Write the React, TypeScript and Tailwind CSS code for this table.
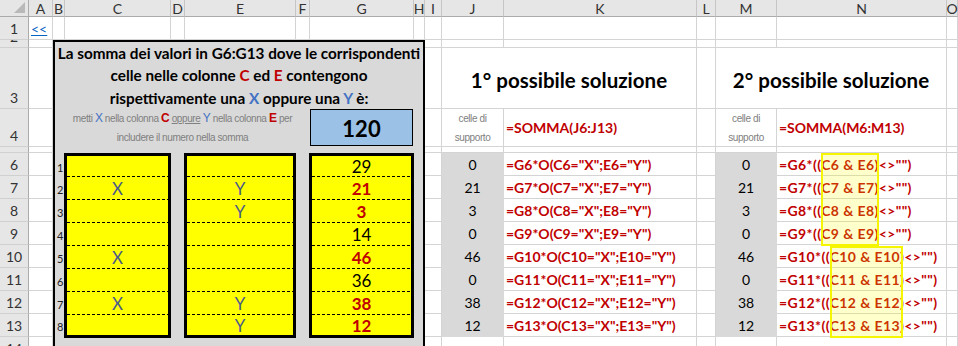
import React from 'react';

const COLS = ['A', 'B', 'C', 'D', 'E', 'F', 'G', 'H', 'I', 'J', 'K', 'L', 'M', 'N', 'O'];
const ROWS = [1, 2, 3, 4, 5, 6, 7, 8, 9, 10, 11, 12, 13, 14];
const UNDER_PANEL = ['B', 'C', 'D', 'E', 'F', 'G', 'H'];

const data = [
  { c: '', e: '', g: 29, hit: false },
  { c: 'X', e: 'Y', g: 21, hit: true },
  { c: '', e: 'Y', g: 3, hit: true },
  { c: '', e: '', g: 14, hit: false },
  { c: 'X', e: '', g: 46, hit: true },
  { c: '', e: '', g: 36, hit: false },
  { c: 'X', e: 'Y', g: 38, hit: true },
  { c: '', e: 'Y', g: 12, hit: true },
];

// content heights of the 8 rows inside the yellow boxes (rows 2..8 also get a dashed line on top)
const boxRows = [20, 22, 22, 22, 22, 22, 22, 20];

const Dash = () => (
  <div className="h-px bg-[image:repeating-linear-gradient(90deg,#000_0_3px,transparent_3px_5px)]" />
);

function YellowBox({ width, render }: { width: string; render: (i: number) => React.ReactNode }) {
  return (
    <div className={`${width} border-[3px] border-black bg-[#ffff00]`}>
      {boxRows.map((h, i) => (
        <React.Fragment key={i}>
          {i > 0 && <Dash />}
          <div className="flex items-center justify-center leading-none" style={{ height: h }}>
            {render(i)}
          </div>
        </React.Fragment>
      ))}
    </div>
  );
}

function Panel() {
  const red = 'text-[#c00000]';
  const blue = 'text-[#4472c4]';
  return (
    <div className="col-start-3 col-end-10 row-start-3 row-end-16 z-10 flex flex-col border-2 border-black bg-[#d9d9d9]">
      <div className="flex h-[67px] flex-col items-center whitespace-nowrap text-[15.3px] font-bold leading-[22.4px] text-black">
        <span>La somma dei valori in G6:G13 dove le corrispondenti</span>
        <span>
          celle nelle colonne <span className={red}>C</span> ed <span className={red}>E</span> contengono
        </span>
        <span>
          rispettivamente una <span className={blue}>X</span> oppure una <span className={blue}>Y</span> è:
        </span>
      </div>

      <div className="flex h-[38px]">
        <div className="flex w-[255px] flex-col items-center whitespace-nowrap font-['Liberation_Sans',Arial,sans-serif] text-[10px] leading-[19px] tracking-[-0.4px] text-[#808080]">
          <span>
            metti <span className={`${blue} text-[12px]`}>X</span> nella colonna{' '}
            <span className={`${red} text-[12px] font-bold`}>C</span> <span className="underline">oppure</span>{' '}
            <span className={`${blue} text-[12px]`}>Y</span> nella colonna{' '}
            <span className={`${red} text-[12px] font-bold`}>E</span> per
          </span>
          <span>includere il numero nella somma</span>
        </div>
        <div className="flex h-[37px] w-[103px] items-center justify-center border border-black bg-[#9bc2e6] pt-[3px] text-[22px] font-bold leading-none text-black">
          120
        </div>
      </div>

      <div className="h-[6px]" />

      <div className="flex items-start">
        <div className="flex w-[9px] flex-col pt-[3px] text-[11px] leading-none text-[#222]">
          {boxRows.map((h, i) => (
            <div key={i} className="flex items-center pl-[2px] pt-[3px]" style={{ height: i > 0 ? h + 1 : h }}>
              {i + 1}
            </div>
          ))}
        </div>
        <YellowBox
          width="w-[107px]"
          render={(i) => <span className="text-[17px] text-[#4a5a8a]">{data[i].c}</span>}
        />
        <div className="w-[13px]" />
        <YellowBox
          width="w-[112px]"
          render={(i) => <span className="text-[17px] text-[#4a5a8a]">{data[i].e}</span>}
        />
        <div className="w-[13px]" />
        <YellowBox
          width="w-[105px]"
          render={(i) => (
            <span className={data[i].hit ? `text-[17px] font-bold ${red}` : 'text-[17px] text-black'}>{data[i].g}</span>
          )}
        />
      </div>
    </div>
  );
}

function cellContent(r: number, col: string): { cls?: string; node?: React.ReactNode } {
  const red = 'text-[#c00000]';
  if (r === 1 && col === 'A') {
    return {
      cls: 'flex items-center pt-[1px]',
      node: <span className="pl-[2px] text-[14px] leading-none text-[#0563c1] underline">&lt;&lt;</span>,
    };
  }
  if (r === 3 && (col === 'J' || col === 'M')) {
    return {
      cls: 'col-span-2 flex items-center justify-center pt-[4px]',
      node: (
        <span className="text-[20.5px] font-bold text-black">
          {col === 'J' ? '1° possibile soluzione' : '2° possibile soluzione'}
        </span>
      ),
    };
  }
  if (r === 4 && (col === 'J' || col === 'M')) {
    return {
      cls: "flex flex-col items-center justify-center font-['Liberation_Sans',Arial,sans-serif] text-[10px] leading-[19px] tracking-[-0.4px] text-[#808080]",
      node: (
        <>
          <span>celle di</span>
          <span>supporto</span>
        </>
      ),
    };
  }
  if (r === 4 && (col === 'K' || col === 'N')) {
    return {
      cls: 'flex items-center pl-[2px]',
      node: <span className={`text-[14px] font-bold ${red}`}>{col === 'K' ? '=SOMMA(J6:J13)' : '=SOMMA(M6:M13)'}</span>,
    };
  }
  if (r >= 6 && r <= 13) {
    const d = data[r - 6];
    if (col === 'J' || col === 'M') {
      return {
        cls: 'flex items-center justify-center bg-[#d9d9d9] !border-[#d9d9d9] text-[14px] text-black',
        node: d.hit ? d.g : 0,
      };
    }
    if (col === 'K') {
      return {
        cls: `flex items-center pl-[2px] text-[14px] font-bold ${red}`,
        node: `=G${r}*O(C${r}="X";E${r}="Y")`,
      };
    }
    if (col === 'N') {
      return {
        cls: `flex items-center pl-[2px] text-[14px] font-bold tracking-[0.4px] ${red}`,
        node: `=G${r}*((C${r} & E${r})<>"")`,
      };
    }
  }
  return {};
}

export default function App() {
  return (
    <div className="relative h-[346px] w-[958px] overflow-hidden bg-white font-[Lato,sans-serif]">
      <div className="grid grid-cols-[29px_24px_12px_106px_14px_111px_14px_104px_11px_17px_62px_193px_19px_61px_170px_11px] grid-rows-[17px_23px_8px_61px_38px_6px_repeat(8,23px)_23px]">
        {/* header row */}
        <div className="relative border-b border-r border-b-[#ababab] border-r-[#ababab] bg-[#e6e6e6]">
          <svg className="absolute bottom-[3px] right-[3px]" width="11" height="11" viewBox="0 0 11 11">
            <polygon points="11,0 11,11 0,11" fill="#b9b9b9" />
          </svg>
        </div>
        {COLS.map((c) => (
          <div
            key={c}
            className="flex items-center justify-center border-b border-r border-b-[#ababab] border-r-[#c6c6c6] bg-[#e6e6e6] pt-px text-[14px] leading-none text-[#333]"
          >
            {c}
          </div>
        ))}

        {ROWS.map((r) => (
          <React.Fragment key={r}>
            <div className="flex items-end justify-center overflow-hidden border-b border-r border-b-[#d0d0d0] border-r-[#ababab] bg-[#e6e6e6] pb-[3px] text-[14px] leading-none text-[#333]">
              {r}
            </div>
            {COLS.map((col, ci) => {
              if (r >= 2 && UNDER_PANEL.includes(col)) return null;
              if (r === 3 && (col === 'K' || col === 'N')) return null;
              const { cls, node } = cellContent(r, col);
              return (
                <div
                  key={col + ci}
                  className={`overflow-hidden whitespace-nowrap border-b border-r border-[#d4d4d4] ${cls ?? ''}`}
                >
                  {node}
                </div>
              );
            })}
          </React.Fragment>
        ))}

        <Panel />
      </div>

      {/* range highlights over column N */}
      <div className="pointer-events-none absolute left-[821px] top-[153px] h-[93px] w-[58px] border-2 border-[#f5f500] bg-[#ffff00]/20" />
      <div className="pointer-events-none absolute left-[830px] top-[246px] h-[92px] w-[73px] border-2 border-[#f5f500] bg-[#ffff00]/20" />
    </div>
  );
}
